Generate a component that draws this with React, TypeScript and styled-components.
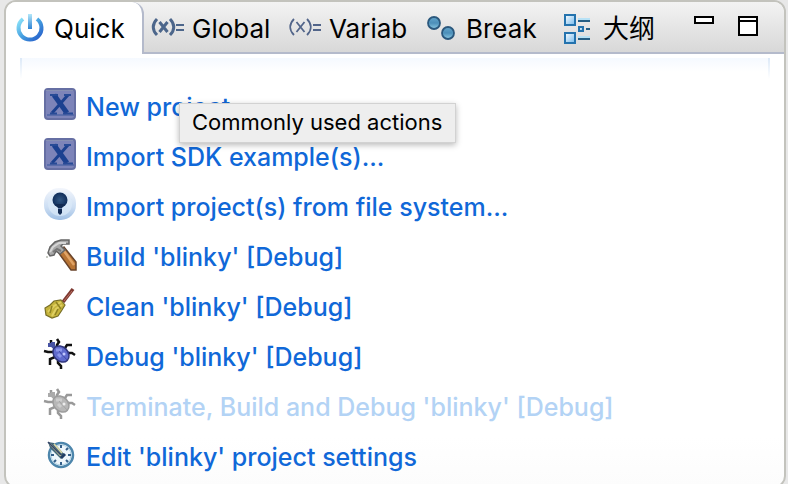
import React from "react";
import styled, { createGlobalStyle } from "styled-components";

const GlobalStyle = createGlobalStyle`
  * { box-sizing: border-box; }
  html { overflow: hidden; }
  body {
    margin: 0;
    background: #e8e8e8;
    color: #000;
    font-family: Inter, "Noto Sans CJK SC", sans-serif;
    font-size: 25px;
    line-height: 32px;
  }
  svg { display: block; flex: none; overflow: visible; }
`;

const Window = styled.div`
  height: 100vh;
  padding: 0 2px 0 4px;
  overflow: hidden;
`;

const Panel = styled.section`
  position: relative;
  min-height: calc(100vh + 4px);
  border: 2px solid #c3c3bd;
  border-radius: 12px;
  overflow: hidden;
  background: linear-gradient(#fff 90%, #fcfcfc);
`;

const TabBar = styled.header`
  display: flex;
  height: 52px;
  border-bottom: 2px solid #b4bacb;
  background: linear-gradient(#f3f3f3, #d8d8d8);
`;

const TabList = styled.div`
  display: flex;
  flex: 1;
`;

const Tab = styled.button<{ $active?: boolean }>`
  display: flex;
  align-items: center;
  gap: 8px;
  width: ${(p) => (p.$active ? "138px" : "137px")};
  height: ${(p) => (p.$active ? "52px" : "50px")};
  padding: ${(p) => (p.$active ? "2px 0 0 8px" : "4px 0 0 8px")};
  border: 0;
  border-right: ${(p) => (p.$active ? "2px solid #b4bacb" : "0")};
  border-top-right-radius: ${(p) => (p.$active ? "12px" : "0")};
  background: ${(p) => (p.$active ? "#fff" : "transparent")};
  color: inherit;
  font: inherit;
  font-size: 26px;
  white-space: nowrap;
`;

const WindowButtons = styled.div`
  display: flex;
  gap: 24px;
  padding: 14px 26px 0 0;
`;

const IconButton = styled.button`
  width: 20px;
  height: 20px;
  padding: 0;
  border: 0;
  background: none;
`;

const HeadingEdge = styled.div`
  display: flex;
  justify-content: space-between;
  height: 21px;
  margin: 4px 14px 0;
  background: linear-gradient(#f5f9ff, #fff 14px);
`;

const EdgeLine = styled.div`
  width: 2px;
  background: linear-gradient(#dce9f8, #fff);
`;

const ActionList = styled.ul`
  margin: 0;
  padding: 0 0 0 38px;
  list-style: none;
`;

const Action = styled.a<{ $disabled?: boolean }>`
  display: flex;
  align-items: center;
  gap: 10px;
  height: 50px;
  color: ${(p) => (p.$disabled ? "#b3d3f5" : "#1068d8")};
  font-weight: 450;
  text-decoration: none;
  white-space: nowrap;
`;

const ActionLabel = styled.span`
  padding-top: 6px;
`;

const Tooltip = styled.div`
  position: absolute;
  top: 101px;
  left: 173px;
  padding: 2px 13px 4px 12px;
  border: 1px solid #d2d2d2;
  background: #eee;
  box-shadow: 0 2px 6px rgba(0, 0, 0, 0.28);
  font-size: 22px;
  white-space: nowrap;
`;

const Svg = ({ children }: { children: React.ReactNode }) => (
  <svg width="32" height="32" viewBox="0 0 32 32" fill="none" aria-hidden="true">
    {children}
  </svg>
);

const PowerIcon = () => (
  <Svg>
    <defs>
      <linearGradient id="power" x1="0" y1="0" x2="1" y2="1">
        <stop offset="0" stopColor="#8fe6fa" />
        <stop offset="0.5" stopColor="#459fe0" />
        <stop offset="1" stopColor="#2459c8" />
      </linearGradient>
      <linearGradient id="powerBar" x1="0" y1="0" x2="0" y2="1">
        <stop offset="0" stopColor="#b4e8fa" />
        <stop offset="1" stopColor="#2f83d4" />
      </linearGradient>
    </defs>
    <path d="M9 6A11.5 11.5 0 1 0 23 6" stroke="url(#power)" strokeWidth="4" />
    <rect x="14" y="1" width="4" height="15" fill="url(#powerBar)" />
  </Svg>
);

const VariableIcon = ({ bold }: { bold?: boolean }) => (
  <Svg>
    <g stroke={bold ? "#4c668b" : "#52658a"} strokeWidth={bold ? 3 : 1.8}>
      <path d="M5 6C0 11 0 17 5 22M18 6C23 11 23 17 18 22" />
      <path d="M7.500 9L15.500 19M15.500 9L7.500 19" />
      <path d="M24 12H32M24 17H32" strokeWidth="2" />
    </g>
  </Svg>
);

const BreakpointsIcon = () => (
  <Svg>
    <defs>
      <linearGradient id="dot" x1="0" y1="0" x2="0" y2="1">
        <stop offset="0" stopColor="#64a5cb" />
        <stop offset="0.5" stopColor="#4c8fb9" />
        <stop offset="1" stopColor="#8dcbe5" />
      </linearGradient>
    </defs>
    <g fill="url(#dot)" stroke="#2b587d" strokeWidth="1.8">
      <circle cx="8" cy="10" r="6" />
      <circle cx="22" cy="20" r="6" />
    </g>
  </Svg>
);

const OutlineIcon = () => (
  <Svg>
    <defs>
      <linearGradient id="node" x1="0" y1="0" x2="1" y2="1">
        <stop offset="0" stopColor="#fff" />
        <stop offset="1" stopColor="#72b9ec" />
      </linearGradient>
    </defs>
    <g fill="url(#node)" stroke="#2473ae" strokeWidth="2">
      <rect x="2" y="2" width="10" height="10" />
      <rect x="2" y="20" width="10" height="10" />
      <rect x="16" y="14" width="4" height="4" />
    </g>
    <path d="M15 6H27M15 24H27" stroke="#b8e2f6" strokeWidth="2" />
    <path d="M15 8H27M23 16H27M15 26H27" stroke="#265f85" strokeWidth="2" />
  </Svg>
);

const XIcon = () => (
  <Svg>
    <rect x="1" y="1" width="30" height="30" rx="3" fill="#7d84b9" stroke="#666fa3" strokeWidth="2" />
    <path d="M2 2.500H29" stroke="#8790b4" />
    <path d="M3 27H30" stroke="#39579c" />
    <path d="M24 7L8 25" stroke="#1c4190" strokeWidth="3" />
    <path d="M10 7L23 25" stroke="#1c4190" strokeWidth="5" />
    <path d="M6 7H14M20 7H27M6 25.500H13M19 25.500H29" stroke="#284b96" strokeWidth="2" />
  </Svg>
);

const ImportIcon = () => (
  <Svg>
    <defs>
      <linearGradient id="disc" x1="0" y1="0" x2="0" y2="1">
        <stop offset="0" stopColor="#f3f6fc" />
        <stop offset="0.6" stopColor="#ccdef3" />
        <stop offset="1" stopColor="#9fbfe4" />
      </linearGradient>
      <radialGradient id="bulb">
        <stop offset="0" stopColor="#315783" />
        <stop offset="1" stopColor="#102d5a" />
      </radialGradient>
    </defs>
    <rect width="32" height="32" rx="15" fill="url(#disc)" />
    <circle cx="16" cy="16" r="12" fill="#dce9f8" opacity="0.7" />
    <circle cx="16" cy="12" r="7.500" fill="url(#bulb)" />
    <path d="M11 16L14 20V25L16 27L18 25V20L21 16Z" fill="#122a52" />
    <path d="M14 20.500H18" stroke="#6783ac" />
  </Svg>
);

const HammerIcon = () => (
  <Svg>
    <path d="M14 14L20 9L32 24V32H27Z" fill="#b97535" stroke="#69442b" strokeWidth="1.500" />
    <path d="M20 13L30 27" stroke="#e0a366" strokeWidth="2.500" />
    <path d="M4 15L6 9L11 4L17 2H25V6L19 6L17 8L21 12L16 16L12 13L10 17L6 18Z" fill="#a9a9a9" stroke="#666" strokeWidth="1.500" />
    <path d="M6 14L9 9L15 5H22" stroke="#d5d5d5" strokeWidth="2" />
    <path d="M9 14L13 11L17 13" stroke="#777" strokeWidth="2" />
    <path d="M2 19H4" stroke="#c7cac2" strokeWidth="2" />
  </Svg>
);

const BroomIcon = () => (
  <Svg>
    <path d="M29 1L19 14" stroke="#7d3931" strokeWidth="3.500" />
    <path d="M28 3L20 13" stroke="#ba7061" />
    <path d="M17 12L21 17L18 22L14 28L8 30L2 27L1 20L6 17L10 13Z" fill="#c6b43c" stroke="#786f27" strokeWidth="1.200" />
    <path d="M17 14L10 18L4 24M18 17L12 21L8 28" stroke="#dfcf62" strokeWidth="2" />
    <path d="M12 14L17 21M8 18L6 25M14 21L11 27" stroke="#908323" strokeWidth="1.500" />
  </Svg>
);

const BugIcon = ({ muted }: { muted?: boolean }) => (
  <Svg>
    <path
      d="M13 1L15 4L13 7V11M28 7H23L19 13M31 17L28 15H22M17 31V28L14 25V21M6 27V21L11 19M0 13L4 14H10M7 2V6"
      stroke={muted ? "#999" : "#111"}
      strokeWidth="2.500"
    />
    <path d="M4 7H9M9 4V8L14 13" stroke={muted ? "#aaa" : "#4753a4"} strokeWidth="4" />
    <ellipse cx="17" cy="16" rx="7" ry="9" transform="rotate(-44 17 16)" fill={muted ? "#b7b7b7" : "#606bcd"} stroke={muted ? "#9c9c9c" : "#30367d"} strokeWidth="1.500" />
    <path d="M12 12L18 12M14 16L17 19" stroke={muted ? "#cdcdcd" : "#8c96ea"} strokeWidth="3" />
    <path d="M15 13L23 22" stroke={muted ? "#a5a5a5" : "#414ba9"} />
    <circle cx="20" cy="16" r="1.500" fill={muted ? "#ededed" : "#c1c8ff"} />
  </Svg>
);

const ClockIcon = () => (
  <Svg>
    <circle cx="17" cy="17" r="12" fill="#eef6fb" stroke="#4d86ac" strokeWidth="2.500" />
    <circle cx="17" cy="17" r="10" stroke="#b4d5e6" />
    <path d="M17 7V10M17 24V27M24 17H27M7 17H10M22 12L24 10M10 24L12 22M22 22L24 24" stroke="#345f89" strokeWidth="2" />
    <path d="M4 4L10 5L21 17L17 21L6 10Z" fill="#426678" />
    <path d="M6 6L17 18M10 6L18 15" stroke="#d9d7a5" strokeWidth="1.800" />
    <path d="M4 4L17 17" stroke="#354567" strokeWidth="1.500" />
    <path d="M17 20L21 16" stroke="#203d64" strokeWidth="3" />
  </Svg>
);

const tabs = [
  { label: "Quick", icon: <PowerIcon />, active: true },
  { label: "Global", icon: <VariableIcon bold /> },
  { label: "Variab", icon: <VariableIcon /> },
  { label: "Break", icon: <BreakpointsIcon /> },
  { label: "大纲", icon: <OutlineIcon /> },
];

const actions = [
  { label: "New project...", icon: <XIcon /> },
  { label: "Import SDK example(s)...", icon: <XIcon /> },
  { label: "Import project(s) from file system...", icon: <ImportIcon /> },
  { label: "Build 'blinky' [Debug]", icon: <HammerIcon /> },
  { label: "Clean 'blinky' [Debug]", icon: <BroomIcon /> },
  { label: "Debug 'blinky' [Debug]", icon: <BugIcon /> },
  { label: "Terminate, Build and Debug 'blinky' [Debug]", icon: <BugIcon muted />, disabled: true },
  { label: "Edit 'blinky' project settings", icon: <ClockIcon /> },
];

export default function App() {
  return (
    <Window>
      <GlobalStyle />
      <Panel>
        <TabBar>
          <TabList role="tablist">
            {tabs.map((tab) => (
              <Tab key={tab.label} role="tab" aria-selected={!!tab.active} $active={tab.active}>
                {tab.icon}
                <span>{tab.label}</span>
              </Tab>
            ))}
          </TabList>
          <WindowButtons>
            <IconButton aria-label="Minimize">
              <svg width="20" height="20" viewBox="0 0 20 20">
                <rect x="1" y="1" width="18" height="6" fill="#fff" stroke="#000" strokeWidth="2" />
              </svg>
            </IconButton>
            <IconButton aria-label="Maximize">
              <svg width="20" height="20" viewBox="0 0 20 20">
                <path d="M1 1H19V19H1ZM1 5H19" fill="#fff" stroke="#000" strokeWidth="2" />
              </svg>
            </IconButton>
          </WindowButtons>
        </TabBar>
        <HeadingEdge>
          <EdgeLine />
          <EdgeLine />
        </HeadingEdge>
        <ActionList>
          {actions.map((action) => (
            <li key={action.label}>
              <Action href="#" $disabled={action.disabled} aria-disabled={action.disabled}>
                {action.icon}
                <ActionLabel>{action.label}</ActionLabel>
              </Action>
            </li>
          ))}
        </ActionList>
        <Tooltip role="tooltip">Commonly used actions</Tooltip>
      </Panel>
    </Window>
  );
}
